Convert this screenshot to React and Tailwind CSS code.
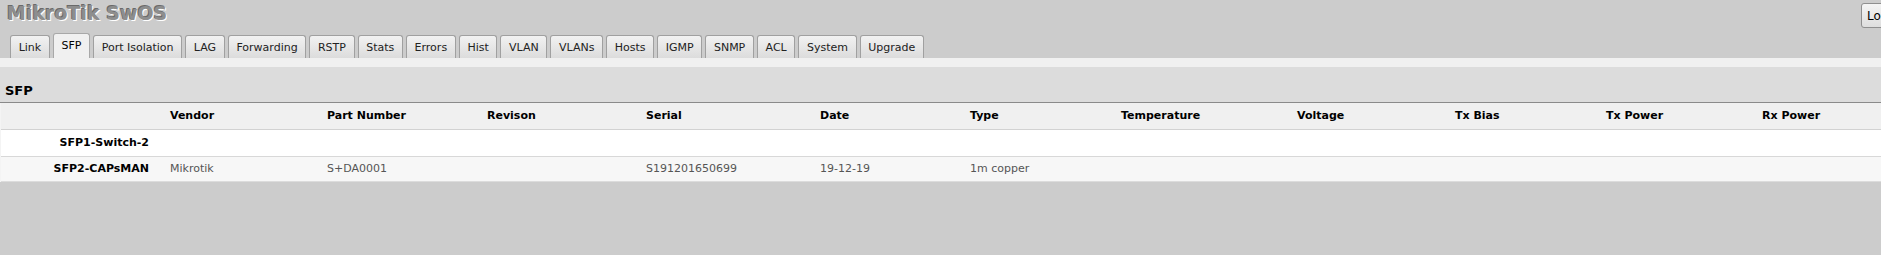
import React from "react";

const tabs = [
  "Link", "SFP", "Port Isolation", "LAG", "Forwarding", "RSTP", "Stats", "Errors",
  "Hist", "VLAN", "VLANs", "Hosts", "IGMP", "SNMP", "ACL", "System", "Upgrade",
];

const columns = [
  "", "Vendor", "Part Number", "Revison", "Serial", "Date", "Type",
  "Temperature", "Voltage", "Tx Bias", "Tx Power", "Rx Power",
];

const rows = [
  { name: "SFP1-Switch-2", cells: ["", "", "", "", "", "", "", "", "", "", ""] },
  {
    name: "SFP2-CAPsMAN",
    cells: ["Mikrotik", "S+DA0001", "", "S191201650699", "19-12-19", "1m copper", "", "", "", "", ""],
  },
];

const grid =
  "grid grid-cols-[159px_157px_160px_159px_174px_150px_151px_176px_158px_151px_156px_1fr]";

export default function App() {
  return (
    <div className="relative w-full h-[255px] overflow-hidden bg-[#cccccc] font-['DejaVu_Sans',sans-serif] text-[11px] text-black">
      {/* Header: product title + logout */}
      <div className="h-[33px] pl-[7px] pt-[1px]">
        <span className="text-[19px] font-bold leading-[24px] text-[#8e8e8e] [text-shadow:-1px_-1px_0_#6a6a6a,1px_1px_0_#ffffff]">
          MikroTik SwOS
        </span>
      </div>
      <button className="absolute left-[1861px] top-[3px] h-[25px] px-[5px] rounded-[3px] border border-[#8f8f8f] bg-gradient-to-b from-[#f4f4f4] to-[#dedede] text-[12px] text-black">
        Logout
      </button>

      {/* Tab strip */}
      <div className="flex items-end gap-[3px] pl-[10px] h-[25px]">
        {tabs.map((t) =>
          t === "SFP" ? (
            <div
              key={t}
              className="h-[25px] px-[7.65px] pb-[1px] flex items-center rounded-t-[3px] border border-b-0 border-[#a8a8a8] bg-[#f0f0f0] leading-none"
            >
              {t}
            </div>
          ) : (
            <div
              key={t}
              className="h-[23px] px-[7.65px] flex items-center rounded-t-[3px] border border-b-0 border-[#a0a0a0] bg-gradient-to-b from-[#f2f2f2] to-[#dcdcdc] text-[#222] leading-none"
            >
              {t}
            </div>
          )
        )}
      </div>

      <div className="h-[9px] bg-[#f0f0f0]" />

      {/* Section header */}
      <div className="h-[36px] bg-[#dcdcdc] border-b border-[#8a8a8a] pl-[5px] pt-[16px]">
        <span className="text-[13px] font-bold leading-[16px]">SFP</span>
      </div>

      {/* Table */}
      <div className="border-l border-[#f4f4f4]">
        <div className={`${grid} h-[27px] pt-[1px] items-center bg-[#f0f0f0] border-b border-[#d2d2d2] font-bold`}>
          {columns.map((c, i) => (
            <div key={i} className="pl-[10px] whitespace-nowrap">
              {c}
            </div>
          ))}
        </div>
        <div className={`${grid} h-[27px] pt-[1px] items-center bg-white border-b border-[#d8d8d8]`}>
          <div className="pr-[11px] text-right font-bold whitespace-nowrap">{rows[0].name}</div>
        </div>
        <div className={`${grid} h-[25px] items-center bg-[#f7f7f7] border-b border-[#dcdcdc]`}>
          <div className="pr-[11px] text-right font-bold whitespace-nowrap">{rows[1].name}</div>
          {rows[1].cells.map((c, ci) => (
            <div key={ci} className="pl-[10px] text-[#555555] whitespace-nowrap">
              {c}
            </div>
          ))}
        </div>
      </div>
    </div>
  );
}
